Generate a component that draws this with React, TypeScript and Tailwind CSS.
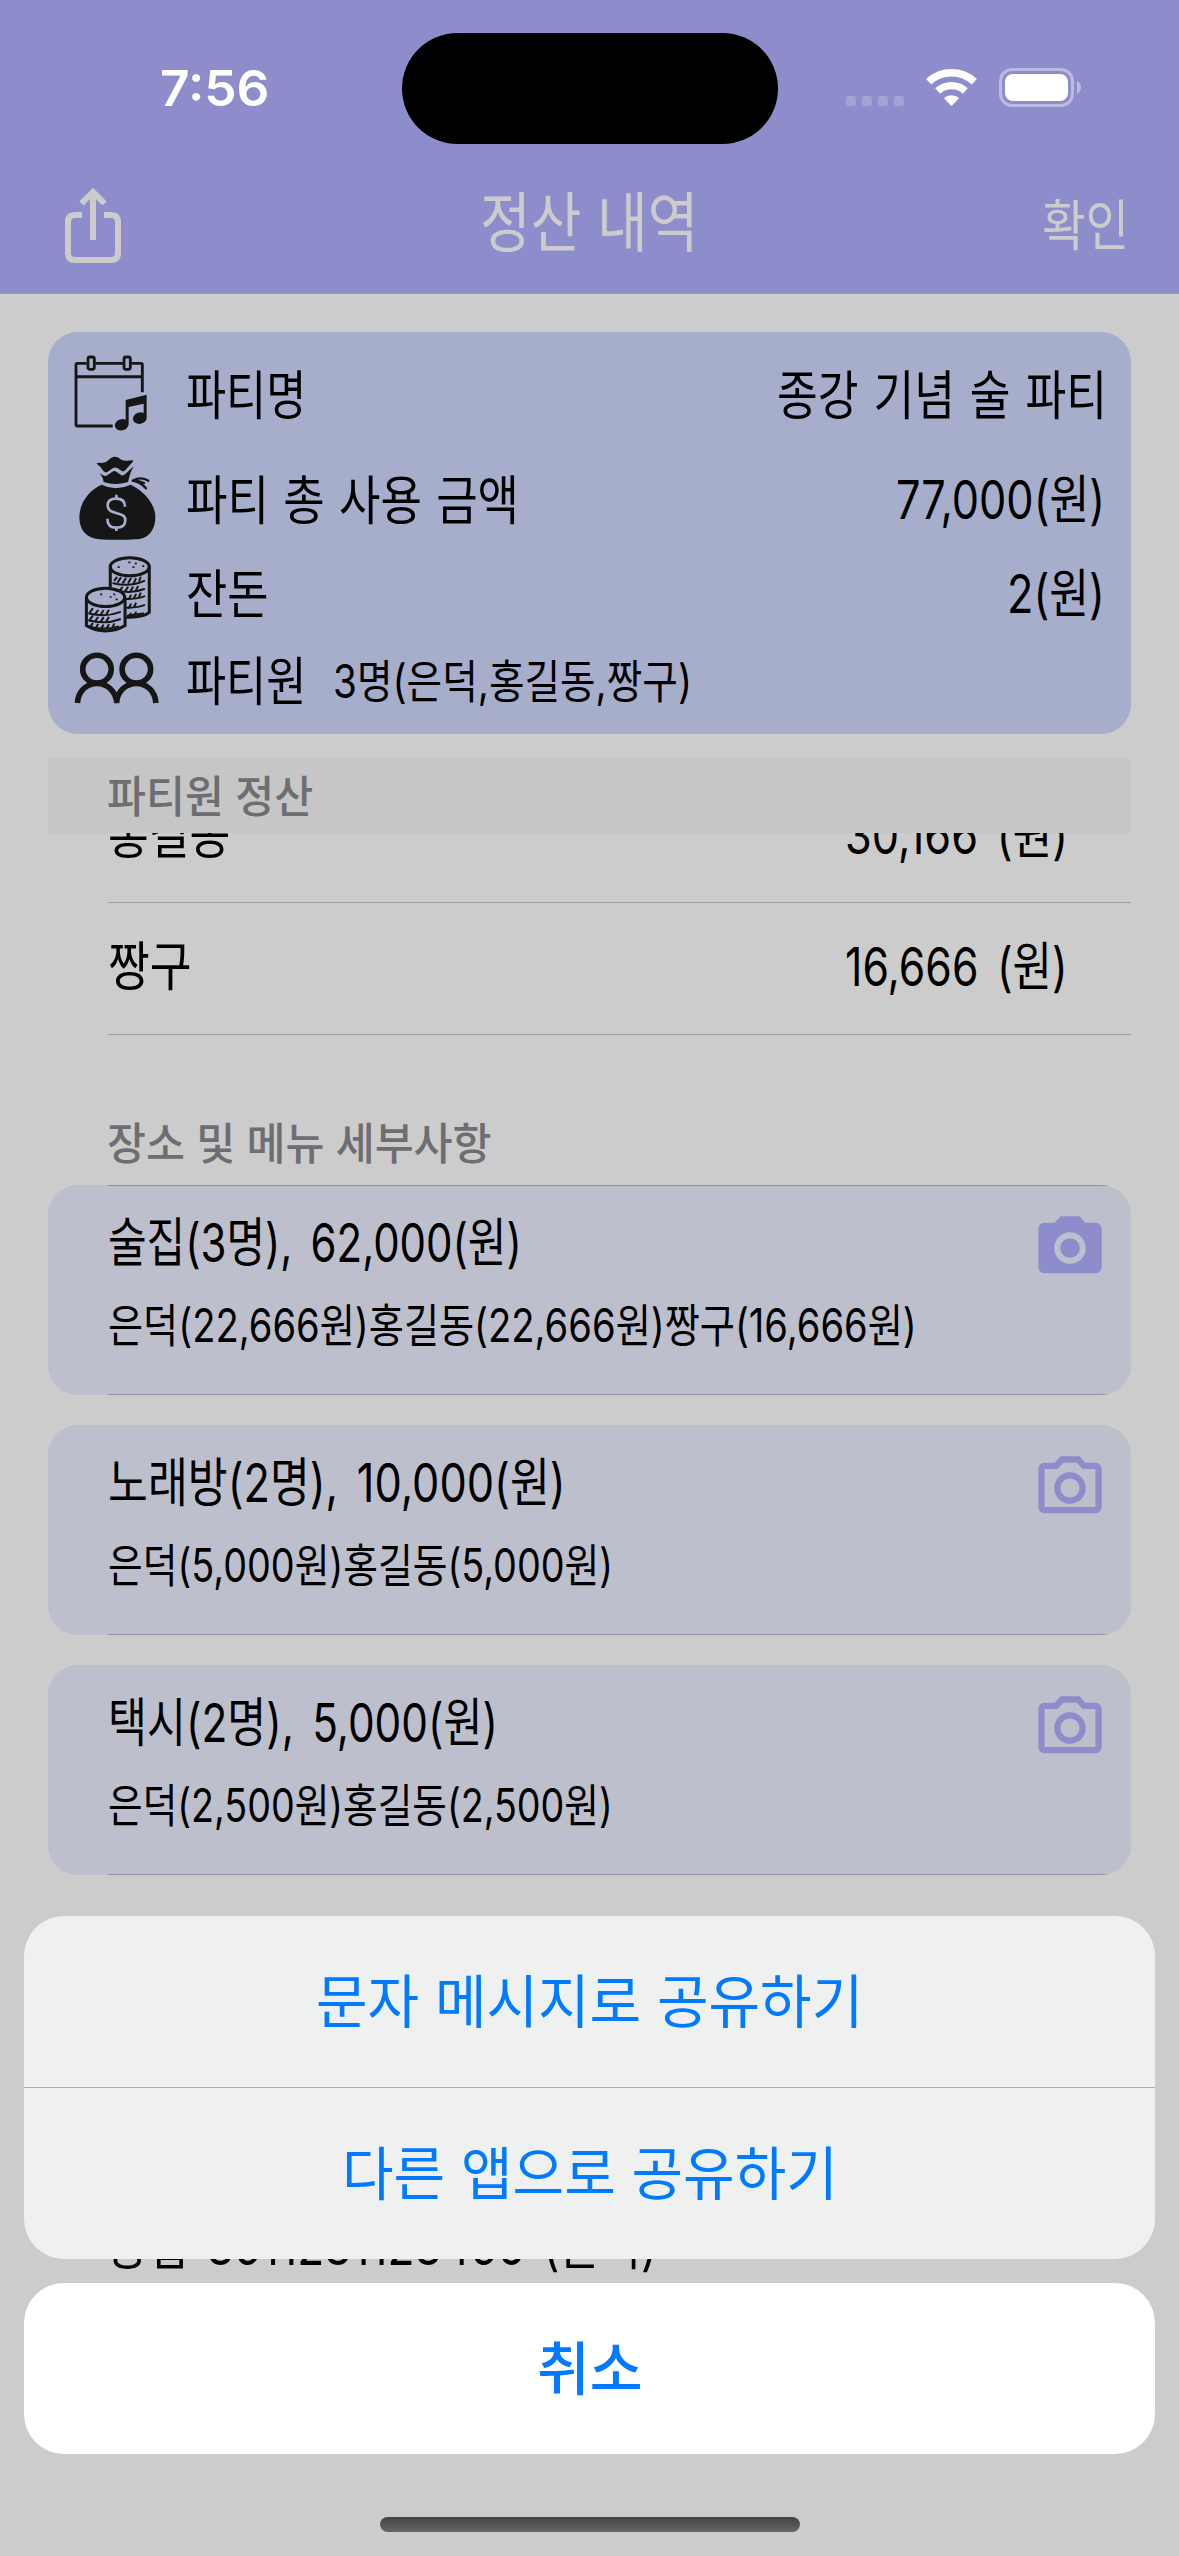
import React from 'react';

type FitProps = {
  w: number;
  className?: string;
  children: React.ReactNode;
};

// One line of text squeezed (or stretched) sideways to a fixed width
const Fit: React.FC<FitProps> = ({ w, className = '', children }) => {
  const ref = React.useRef<HTMLSpanElement>(null);
  const [scale, setScale] = React.useState(1);

  React.useLayoutEffect(() => {
    if (ref.current && ref.current.offsetWidth > 0) setScale(w / ref.current.offsetWidth);
  }, [w]);

  return (
    <span className={`block shrink-0 whitespace-nowrap leading-none ${className}`} style={{ width: w }}>
      <span ref={ref} className="inline-block origin-left align-top" style={{ transform: `scaleX(${scale})` }}>{children}</span>
    </span>
  );
};

const CalendarIcon = () => (
  <svg width="77" height="80" viewBox="40 40 231 240" fill="none" stroke="#161616" strokeWidth="8.5">
    <path d="M81 71H53q-4 0-4 4V255q0 4 4 4H159M107 71H190M215 71H244q4 0 4 4V158" />
    <path d="M49 111H248" strokeWidth="9" />
    <rect x="85" y="52" width="19" height="37" rx="6" />
    <rect x="193" y="52" width="19" height="37" rx="6" />
    <path d="M198 181L261 165V237a21 17 -15 1 1-9-17V192L207 202V252a21 17 -15 1 1-9-12z" fill="#161616" stroke="none" />
  </svg>
);

const MoneyBagIcon = () => (
  <svg width="80" height="87" viewBox="50 345 240 261" fill="#161616">
    <path d="M108 370q8-3 17-1q12 0 19-8q9-11 20-11q10 0 19 9q8 5 34 2q3 1 0 5l-24 26q-5 4-10 0l-12-8q-7-3-14 1l-16 11q-6 3-11-2q-8-13-22-24z" />
    <path d="M117 400l11 6q8 4 14-1l14-10q7-4 13 1l13 9q6 3 12-2l26-24q-10 17-14 35l-3 12q-39 12-73 0q-2-16-13-26z" />
    <path d="M124 434q42 21 87 0c42 20 74 58 74 98c0 36-20 66-58 66q-56 3-110 0c-38-3-60-27-60-66c0-40 26-80 67-98z" />
    <path d="M217 422q25-14 47 0M217 422q23 4 40 23M217 422q16-2 34 7" fill="none" stroke="#161616" strokeWidth="7" strokeLinecap="round" />
    <g fill="none" stroke="#a7aecb" strokeWidth="8">
      <path d="M194 500q0-24-26-24t-26 20c0 31 53 17 53 44q0 23-27 23t-27-27" />
      <path d="M168 464v13M168 562v11" />
    </g>
  </svg>
);

const CoinsIcon = () => (
  <svg width="70" height="80" viewBox="68 642 208 238" fill="none" stroke="#161616" strokeWidth="9">
    <ellipse cx="207" cy="680" rx="58" ry="27" />
    <path d="M149 680V742M265 680L265 816q-18 16-69 14" />
    <ellipse cx="135" cy="771" rx="57" ry="27" />
    <path d="M78 771V855q24 16 57 16t58-16V771" />
    <g strokeWidth="6" strokeLinecap="round">
      <path d="M158 729q50 12 92-7M162 749q50 13 88-3M197 776q30 0 53-8M197 802q30 0 53-8M202 825l45-6" />
      <path d="M162 720l6-8M172 725l8-12M187 727l8-12M203 727l7-12M220 726l5-10M235 722l4-10" />
      <path d="M178 750l6-8M194 752l7-11M210 751l6-10M226 749l5-10M204 776l6-10M220 773l5-10M235 769l4-10M204 802l6-10M220 799l5-10M205 827l5-8M221 824l4-8" />
      <path d="M86 819q50 12 92-4M86 840q50 12 92-4M86 858q45 12 86 0" />
      <path d="M88 816l8-11M104 821l8-11M121 822l7-11M138 820l6-10M88 838l8-11M104 842l8-11M121 843l7-11M138 841l6-10M90 858l6-9M106 862l6-10M122 864l6-10M139 862l5-9M156 860l4-9" />
    </g>
    <path d="M171 681h6M203 667h6M215 681h6M222 670h6M244 678h6M119 762h6M147 770h6M158 762h6M165 777h6" strokeWidth="5" />
  </svg>
);

const MembersIcon = () => (
  <svg width="87" height="53" viewBox="40 930 262 160" fill="none" stroke="#161616" strokeWidth="17">
    <ellipse cx="112" cy="985" rx="43" ry="42" />
    <ellipse cx="231" cy="985" rx="43" ry="42" />
    <path d="M53 1087c2-36 28-59 59-59s57 23 60 59M171 1087c2-36 29-59 60-59s57 23 59 59" />
  </svg>
);

const ShareIcon = () => (
  <svg width="57" height="76" viewBox="0 0 57 76" fill="none" stroke="#cccccc" strokeWidth="6">
    <path d="M17 27H10q-7 0-7 7V65q0 7 7 7H46q7 0 7-7V34q0-7-7-7H39" />
    <path d="M28 52V4M16.500 15.500L28 4L39.500 15.500" />
  </svg>
);

const CameraIcon = ({ filled }: { filled: boolean }) => (
  <svg width="76" height="76" viewBox="0 0 24 24" fill="#8e8dcc">
    {filled ? (
      <>
        <circle cx="12" cy="12" r="3.100" />
        <path d="M9 2L7.170 4H4c-1.100 0-2 .9-2 2v12c0 1.100.9 2 2 2h16c1.100 0 2-.9 2-2V6c0-1.100-.9-2-2-2h-3.170L15 2H9zm3 15c-2.760 0-5-2.240-5-5s2.240-5 5-5 5 2.240 5 5-2.240 5-5 5z" />
      </>
    ) : (
      <path d="M14.120 4l1.830 2H20v12H4V6h4.050l1.830-2h4.240M15 2H9L7.170 4H4c-1.100 0-2 .9-2 2v12c0 1.100.9 2 2 2h16c1.100 0 2-.9 2-2V6c0-1.100-.9-2-2-2h-3.170L15 2zm-3 7c1.650 0 3 1.350 3 3s-1.350 3-3 3-3-1.350-3-3 1.350-3 3-3m0-2c-2.760 0-5 2.240-5 5s2.240 5 5 5 5-2.240 5-5-2.240-5-5-5z" />
    )}
  </svg>
);

const StatusBar = () => (
  <div className="flex h-[177px] items-start">
    <div className="w-[402px] pl-[160px] pt-[63px]">
      <Fit w={110} className="text-[50px] font-semibold text-white">7:56</Fit>
    </div>
    <div className="mt-[33px] h-[111px] w-[376px] rounded-full bg-black" />
    <div className="flex pl-[68px] pt-[68px]">
      <div className="flex gap-1.5 pt-7">
        {[0, 1, 2, 3].map((i) => (
          <div key={i} className="size-2.5 rounded-[3px] bg-[#a4a3d6]" />
        ))}
      </div>
      <svg className="ml-[22px]" width="51" height="39" viewBox="0 0 51 39" fill="none" stroke="#fff">
        <path d="M2.700 13.800a33.500 33.500 0 0 1 45.600 0" strokeWidth="7.500" />
        <path d="M11.700 23a20.500 20.500 0 0 1 27.600 0" strokeWidth="7.200" />
        <path d="M17.800 30.100a11.500 11.500 0 0 1 15.400 0L25.500 38z" fill="#fff" stroke="none" />
      </svg>
      <svg className="ml-[22px]" width="83" height="39" viewBox="0 0 83 39">
        <rect x="1.500" y="1.500" width="72" height="36" rx="11.500" fill="none" stroke="#bbbade" strokeWidth="3" />
        <rect x="6" y="6" width="63" height="27" rx="8" fill="#fff" />
        <path d="M78 13q4 2.500 4 6.500t-4 6.500z" fill="#bbbade" />
      </svg>
    </div>
  </div>
);

const summary = [
  { icon: <CalendarIcon />, label: '파티명', labelW: 120, value: '종강 기념 술 파티', valueW: 330, rowCls: 'h-[108px]', textCls: 'pt-0.5', iconCls: 'pb-1' },
  { icon: <MoneyBagIcon />, label: '파티 총 사용 금액', labelW: 333, value: '77,000(원)', valueW: 209, rowCls: 'h-[102px]', textCls: 'pt-px pr-0.5', iconCls: 'pl-1 pb-[3px]' },
  { icon: <CoinsIcon />, label: '잔돈', labelW: 83, value: '2(원)', valueW: 98, rowCls: 'h-[86px]', textCls: 'pr-0.5', iconCls: 'pl-2.5' },
];

const shares = [
  { name: '홍길동', nameW: 122, amount: '30,166 (원)', amountW: 223 },
  { name: '짱구', nameW: 84, amount: '16,666 (원)', amountW: 223 },
];

const places = [
  { title: '술집(3명), 62,000(원)', titleW: 414, detail: '은덕(22,666원)홍길동(22,666원)짱구(16,666원)', detailW: 809, photo: true },
  { title: '노래방(2명), 10,000(원)', titleW: 458, detail: '은덕(5,000원)홍길동(5,000원)', detailW: 505, photo: false },
  { title: '택시(2명), 5,000(원)', titleW: 390, detail: '은덕(2,500원)홍길동(2,500원)', detailW: 505, photo: false },
];

const App: React.FC = () => (
  <div className="relative h-[2556px] w-[1179px] overflow-hidden bg-[#cccccc] font-['Inter','Noto_Sans_CJK_KR',sans-serif] text-black">
    <header className="h-[294px] border-b border-[#9c9ba8] bg-[#8e8dcc]">
      <StatusBar />
      <div className="flex items-center text-[#cccccc]">
        <div className="w-[480px] pl-[65px] pt-[11px]"><ShareIcon /></div>
        <Fit w={218} className="pt-1 text-[65px]">정산 내역</Fit>
        <div className="ml-auto mr-[50px] pt-2.5">
          <Fit w={87} className="text-[55px]">확인</Fit>
        </div>
      </div>
    </header>

    <main className="px-12 pt-[38px]">
      <section className="h-[402px] rounded-[30px] bg-[#a7aecb] pl-[25px] pr-6 pt-[9px] text-[53px]">
        {summary.map((row) => (
          <div key={row.label} className={`flex items-center ${row.rowCls}`}>
            <div className={`w-[113px] ${row.iconCls}`}>{row.icon}</div>
            <Fit w={row.labelW} className="pt-0.5 [word-spacing:2px]">{row.label}</Fit>
            <div className={`ml-auto [word-spacing:3px] ${row.textCls}`}><Fit w={row.valueW}>{row.value}</Fit></div>
          </div>
        ))}
        <div className="flex h-[88px] items-center">
          <div className="w-[113px] pb-2"><MembersIcon /></div>
          <Fit w={120} className="pt-0.5">파티원</Fit>
          <Fit w={359} className="ml-[27px] text-[46px]">3명(은덕,홍길동,짱구)</Fit>
        </div>
      </section>

      <section className="mt-6">
        <div className="flex h-[75px] items-center bg-[#c6c6c6] pl-[59px] pt-0.5 text-[44px] font-medium text-[#6e6e72]">
          <Fit w={206}>파티원 정산</Fit>
        </div>
        {/* the first row is scrolled halfway under the section header */}
        <div className="flex h-[202px] flex-col justify-end overflow-hidden">
          {shares.map((s) => (
            <div key={s.name} className="ml-[60px] flex h-[132px] shrink-0 items-center justify-between border-b border-[#9d9d9f] pb-0.5 pr-[63px] text-[53px]">
              <div><Fit w={s.nameW}>{s.name}</Fit></div>
              <Fit w={s.amountW} className="[word-spacing:8px]">{s.amount}</Fit>
            </div>
          ))}
        </div>
      </section>

      <section>
        <div className="flex h-[150px] items-end pb-[19px] pl-[59px] text-[44px] font-medium text-[#6e6e72]">
          <Fit w={385}>장소 및 메뉴 세부사항</Fit>
        </div>
        <div className="flex flex-col gap-[30px]">
          {places.map((p, i) => (
            <div key={p.title} className="flex h-[210px] flex-col overflow-hidden rounded-[30px] bg-[#bdbfcc]">
              <div className={`ml-[60px] h-px ${i === 0 ? 'bg-[#9294a4]' : ''}`} />
              <div className="flex flex-1 justify-between pl-[60px] pr-[23px]">
                <div>
                  <Fit w={p.titleW} className="mt-[31px] text-[53px] [word-spacing:8px]">{p.title}</Fit>
                  <Fit w={p.detailW} className="mt-[32px] text-[46px]">{p.detail}</Fit>
                </div>
                <div className="-ml-20 pt-6"><CameraIcon filled={p.photo} /></div>
              </div>
              <div className="ml-[60px] h-px bg-[#9294a4]" />
            </div>
          ))}
        </div>
      </section>

      <div className="pl-[59px] pt-[345px] text-[53px]">
        <Fit w={550} className="[word-spacing:7px]">농협 3511231123456 (은덕)</Fit>
      </div>
    </main>

    {/* action sheet */}
    <div className="absolute inset-x-6 bottom-[102px] flex flex-col gap-6 text-[58px] text-[#007aff]">
      <div className="h-[343px] overflow-hidden rounded-[40px] bg-[#eff0f0]">
        <div className="flex h-[172px] items-center justify-center border-b border-[#adadaf]">
          <Fit w={547}>문자 메시지로 공유하기</Fit>
        </div>
        <div className="flex h-[171px] items-center justify-center">
          <Fit w={496}>다른 앱으로 공유하기</Fit>
        </div>
      </div>
      <div className="flex h-[171px] items-center justify-center rounded-[40px] bg-white font-medium">
        <Fit w={106}>취소</Fit>
      </div>
    </div>

    <div className="absolute bottom-6 left-[380px] h-[15px] w-[420px] rounded-full bg-linear-to-b from-[#424443] to-[#666666]" />
  </div>
);

export default App;
